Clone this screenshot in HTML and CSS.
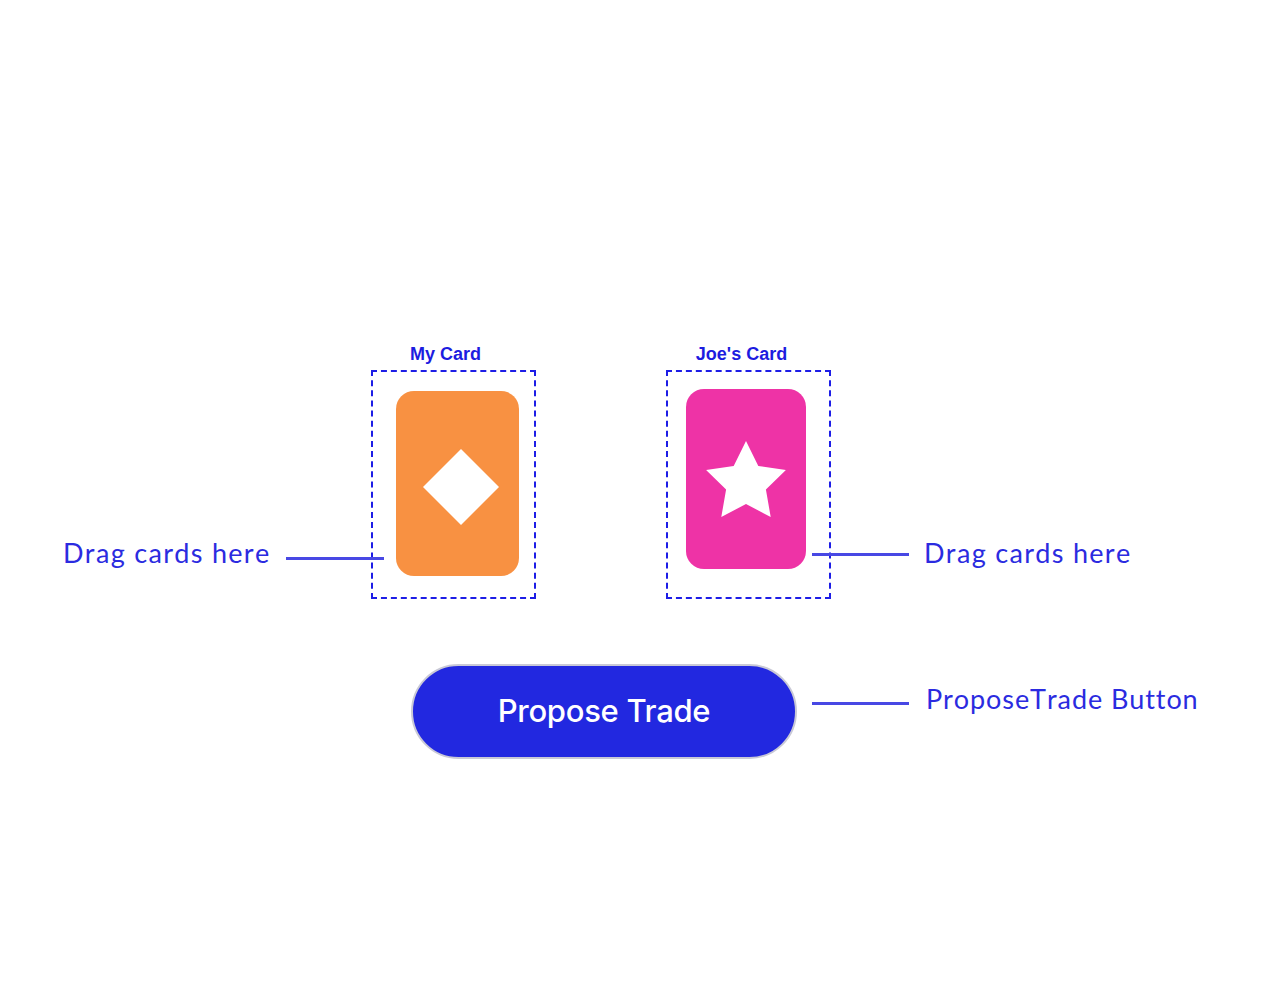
FILE: index.html
```html
<!DOCTYPE html>
<html lang="en">
<head>
    <meta charset="UTF-8">
    <meta name="viewport" content="width=device-width, initial-scale=1.0">
    <title>Propose Trade</title>
    <link rel="stylesheet" href="styles.css">
</head>
<body>
    <main class="stage">
        <div class="slots">
            <div class="slot">
                <div class="slot-label slot-label-mine">My Card</div>
                <div class="drop-zone drop-zone-mine">
                    <div class="card card-orange">
                        <svg class="card-icon" width="78" height="78" viewBox="0 0 78 78">
                            <polygon points="39,1 77,39 39,77 1,39" fill="#fff"/>
                        </svg>
                    </div>
                </div>
            </div>
            <div class="slot">
                <div class="slot-label slot-label-joe">Joe's Card</div>
                <div class="drop-zone drop-zone-joe">
                    <div class="card card-pink">
                        <svg class="card-icon" width="86" height="80" viewBox="0 0 86 80">
                            <polygon points="43,1 55.3,26 82.9,30 62.9,49.5 67.7,77 43,64 18.3,77 23.1,49.5 3.1,30 30.7,26" fill="#fff"/>
                        </svg>
                    </div>
                </div>
            </div>
        </div>

        <button class="propose-btn">Propose Trade</button>

        <!-- annotations -->
        <div class="note note-left">Drag cards here</div>
        <span class="note-line line-left"></span>
        <span class="note-line line-right"></span>
        <div class="note note-right">Drag cards here</div>
        <span class="note-line line-btn"></span>
        <div class="note note-btn">ProposeTrade Button</div>
    </main>
</body>
</html>
```

FILE: styles.css
```css
* {
    box-sizing: border-box;
}
body {
    margin: 0;
    background: #fff;
}
.stage {
    position: relative;
    width: 1272px;
    height: 984px;
    padding: 344px 0 0 371px;
}
.slots {
    display: flex;
    gap: 130px;
}
.slot {
    display: flex;
    flex-direction: column;
    align-items: center;
    gap: 6px;
}
.slot-label {
    font-family: "Liberation Sans", Arial, sans-serif;
    font-weight: bold;
    font-size: 18px;
    line-height: 20px;
    color: #1c1ce0;
}
.slot-label-mine {
    margin-right: 16px;
}
.slot-label-joe {
    margin-right: 14px;
}
.drop-zone {
    width: 165px;
    height: 229px;
    border: 2px dashed #1d1de6;
}
.drop-zone-mine {
    padding: 19px 0 0 23px;
}
.drop-zone-joe {
    padding: 17px 0 0 18px;
}
.card {
    display: flex;
    align-items: center;
    justify-content: center;
}
.card-orange {
    width: 123px;
    height: 185px;
    border-radius: 18px;
    background: #f89142;
}
.card-orange .card-icon {
    margin: 7px 0 0 7px;
}
.card-pink {
    width: 120px;
    height: 180px;
    border-radius: 18px;
    background: #ee33a6;
}
.card-pink .card-icon {
    margin-top: 2px;
}
.propose-btn {
    display: block;
    margin: 65px 0 0 40px;
    width: 386px;
    height: 95px;
    border-radius: 48px;
    border: 2px solid #c9c9d6;
    background: #2228e0;
    color: #fff;
    font-family: Inter, "Liberation Sans", sans-serif;
    font-size: 31px;
    font-weight: 500;
    letter-spacing: -0.3px;
    padding: 0 0 2px 0;
}
.note {
    position: absolute;
    font-family: Lato, "Noto Sans", sans-serif;
    font-size: 27px;
    line-height: 32px;
    letter-spacing: 1.3px;
    font-kerning: none;
    color: #2b2be0;
    white-space: nowrap;
}
.note-left {
    left: 63px;
    top: 537px;
}
.note-right {
    left: 924px;
    top: 537px;
}
.note-btn {
    left: 926px;
    top: 683px;
    letter-spacing: 0.9px;
}
.note-line {
    position: absolute;
    height: 3px;
    background: #4848e4;
}
.line-left {
    left: 286px;
    top: 557px;
    width: 98px;
}
.line-right {
    left: 812px;
    top: 553px;
    width: 97px;
}
.line-btn {
    left: 812px;
    top: 702px;
    width: 97px;
}
```
